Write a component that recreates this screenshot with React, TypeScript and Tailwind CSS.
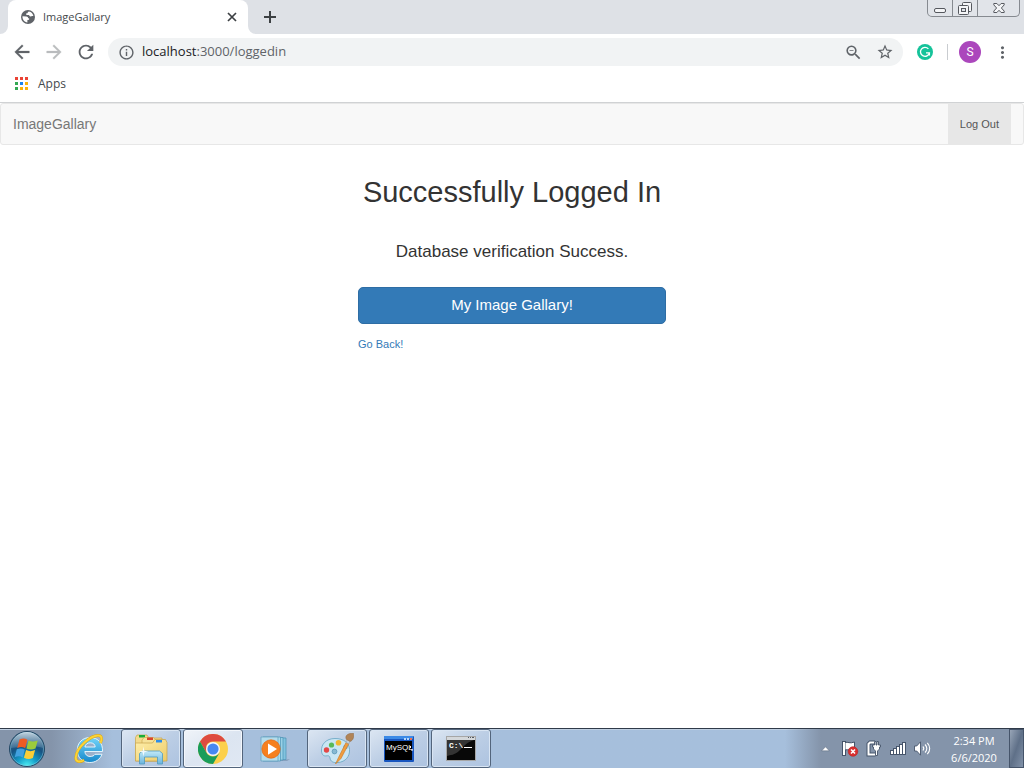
import React from 'react';
import {
  MdAdd,
  MdArrowBack,
  MdArrowForward,
  MdClose,
  MdInfoOutline,
  MdMoreVert,
  MdRefresh,
  MdStarBorder,
  MdZoomOut,
} from 'react-icons/md';

const APP_DOTS = [
  'bg-[#ea4335]', 'bg-[#ea4335]', 'bg-[#ea4335]',
  'bg-[#34a853]', 'bg-[#1a84f0]', 'bg-[#fbb30a]',
  'bg-[#34a853]', 'bg-[#fbb30a]', 'bg-[#fbb30a]',
];

function WindowControls() {
  return (
    <div className="mr-1 flex h-[17px] rounded-b-[5px] border border-t-0 border-[#868a90] bg-[#e1e4e9]">
      <button aria-label="Minimize" className="flex w-[25px] items-center justify-center border-r border-[#868a90]">
        <svg width="12" height="16" viewBox="0 0 12 16">
          <rect x="0.5" y="8.5" width="11" height="4" rx="1.5" fill="#f4f5f7" stroke="#55585e" />
        </svg>
      </button>
      <button aria-label="Restore" className="flex w-[25px] items-center justify-center border-r border-[#868a90]">
        <svg width="14" height="16" viewBox="0 0 14 16">
          <rect x="4.5" y="2.5" width="9" height="9" rx="1" fill="#f4f5f7" stroke="#55585e" />
          <rect x="0.5" y="5.5" width="10" height="9" rx="1" fill="#f4f5f7" stroke="#55585e" />
          <rect x="3.5" y="8.5" width="4" height="3" fill="#e1e4e9" stroke="#55585e" />
        </svg>
      </button>
      <button aria-label="Close window" className="flex w-[41px] items-center justify-center">
        <svg width="12" height="16" viewBox="0 0 12 16">
          <path
            d="M.8 3.5h3.1L6 5.7l2.1-2.200h3.1v1.400L8.400 8l2.800 3.100v1.400H8.100L6 10.300l-2.100 2.200H.8v-1.400L3.600 8 .8 4.900z"
            fill="#f4f5f7"
            stroke="#55585e"
          />
        </svg>
      </button>
    </div>
  );
}

function TabStrip() {
  return (
    <header className="flex h-[34px] items-start bg-[#dee1e6] pl-2">
      <div className="relative flex h-[34px] w-60 items-center rounded-t-lg bg-white pl-[13px] pr-2">
        <svg className="absolute bottom-0 -left-2" width="8" height="8" viewBox="0 0 8 8">
          <path d="M8 0v8H0a8 8 0 0 0 8-8z" fill="#fff" />
        </svg>
        <svg className="absolute bottom-0 -right-2" width="8" height="8" viewBox="0 0 8 8">
          <path d="M0 0v8h8a8 8 0 0 1-8-8z" fill="#fff" />
        </svg>
        <svg width="14" height="14" viewBox="0 0 14 14">
          <circle cx="7" cy="7" r="7" fill="#5f6368" />
          <path
            d="M1.500 6.300 5.400 6.400c1.200.1 1.700.8 1.700 1.800l1 .1v1.400L6.400 10v2.400C3.400 12.200 1.300 9.600 1.500 6.300zM8 1.600c-1 .3-1.500.9-1.400 1.700H5.300v1.600h2.300c.8 0 .9 1.500 1.900 1.600.8.1 1.200-.5 2.900-.4C12 3.800 10.300 2 8 1.600z"
            fill="#fff"
          />
        </svg>
        <span className="ml-2 flex-1 text-[11px] text-[#45494d]">ImageGallary</span>
        <button aria-label="Close tab" className="flex size-4 items-center justify-center text-[#3c4043]">
          <svg width="10" height="10" viewBox="0 0 10 10">
            <path d="m1 1 8 8m0-8-8 8" stroke="currentColor" strokeWidth="1.700" />
          </svg>
        </button>
      </div>
      <button aria-label="New tab" className="ml-3 flex h-[34px] w-5 items-center justify-center text-[#3c4043]">
        <svg width="12" height="12" viewBox="0 0 12 12">
          <path d="M6 0v12M0 6h12" stroke="currentColor" strokeWidth="2" />
        </svg>
      </button>
      <div className="flex-1" />
      <WindowControls />
    </header>
  );
}

function Toolbar() {
  return (
    <div className="flex h-9 items-center bg-white text-[#5f6368]">
      <button aria-label="Back" className="ml-3 flex w-5 justify-center">
        <MdArrowBack size={22} stroke="currentColor" strokeWidth={0.3} className="shrink-0 [&>path:first-child]:stroke-none" />
      </button>
      <button aria-label="Forward" className="ml-3 flex w-5 justify-center text-[#babcbe]">
        <MdArrowForward size={22} stroke="currentColor" strokeWidth={0.3} className="shrink-0 [&>path:first-child]:stroke-none" />
      </button>
      <button aria-label="Reload" className="ml-3 flex w-5 justify-center">
        <MdRefresh size={22} className="shrink-0" />
      </button>
      <div className="ml-3 flex h-7 flex-1 items-center rounded-full bg-[#f1f3f4] pl-[10px] pr-[9px]">
        <MdInfoOutline size={17} />
        <div className="ml-[7px] flex-1 text-[13px]">
          <span className="text-[#202124]">localhost</span>:3000/loggedin
        </div>
        <button aria-label="Zoom"><MdZoomOut size={19} /></button>
        <button aria-label="Bookmark this page" className="ml-[13px]"><MdStarBorder size={18} /></button>
      </div>
      <button aria-label="Grammarly" className="ml-[14px]">
        <svg width="16" height="16" viewBox="0 0 16 16">
          <circle cx="8" cy="8" r="8" fill="#15c39a" />
          <path d="M11.400 4.900A4.500 4.500 0 1 0 12.400 8.800H9M12.400 8.300v3.200" fill="none" stroke="#fff" strokeWidth="1.300" />
        </svg>
      </button>
      <div className="ml-[14px] h-4 w-px bg-[#c9ccd0]" />
      <button aria-label="Profile" className="ml-[11px] flex size-[22px] items-center justify-center rounded-full bg-[#ab47bc] font-[Roboto,sans-serif] text-xs text-white">
        S
      </button>
      <button aria-label="Menu" className="ml-[11px] mr-3 flex w-5 justify-center"><MdMoreVert size={19} /></button>
    </div>
  );
}

function BookmarksBar() {
  return (
    <div className="flex h-8 items-center bg-white pl-[15px] pb-[5px]">
      <a href="#apps" className="flex items-center gap-[10px] text-xs leading-[17px] text-[#45494d]">
        <span className="grid grid-cols-3 gap-[2px]">
          {APP_DOTS.map((c, i) => <span key={i} className={`size-[3px] ${c}`} />)}
        </span>
        Apps
      </a>
    </div>
  );
}

function Page() {
  return (
    <main className="flex-1 border-t border-[#d0d2d4] bg-white font-['Liberation_Sans',Arial,sans-serif] text-[#333]">
      <nav className="flex h-[42px] items-stretch justify-between rounded-[3px] border border-[#e7e7e7] bg-[#f8f8f8] pl-3 pr-3">
        <a href="#home" className="flex items-center text-[14px] text-[#777]">ImageGallary</a>
        <a href="#logout" className="flex items-center bg-[#e7e7e7] px-3 text-[11px] text-[#555]">Log Out</a>
      </nav>
      <section className="mx-auto flex w-[308px] flex-col">
        <h1 className="mt-[31px] text-center text-[29px] leading-8">Successfully Logged In</h1>
        <p className="mt-8 text-center text-[17px] leading-6">Database verification Success.</p>
        <button className="mt-[23px] h-[37px] rounded-[5px] border border-[#2e6da4] bg-[#337ab7] text-[15px] text-white">
          My Image Gallary!
        </button>
        <a href="#back" className="mt-3 self-start text-[11px] leading-4 text-[#337ab7]">Go Back!</a>
      </section>
    </main>
  );
}

function StartOrb() {
  return (
    <svg width="38" height="38" viewBox="0 0 38 38">
      <defs>
        <radialGradient id="orb" cx="50%" cy="100%" r="85%">
          <stop offset="0" stopColor="#4ff3f5" />
          <stop offset=".35" stopColor="#139cc8" />
          <stop offset=".7" stopColor="#175382" />
          <stop offset="1" stopColor="#3d6485" />
        </radialGradient>
        <linearGradient id="orbTop" x1="0" y1="0" x2="0" y2="1">
          <stop offset="0" stopColor="#e4f0f7" stopOpacity=".8" />
          <stop offset="1" stopColor="#7ba4bf" stopOpacity=".3" />
        </linearGradient>
      </defs>
      <circle cx="19" cy="19" r="17.500" fill="url(#orb)" stroke="#234865" />
      <circle cx="19" cy="19" r="16.500" fill="none" stroke="#8ac9df" strokeOpacity=".5" />
      <path d="M3 18a16 16 0 0 1 32 0c-8-3-22-1-32 0z" fill="url(#orbTop)" />
      <path d="M11.500 9.500c3.200-1.600 5.500-1.400 7.900.3l-2.200 8.400c-2.400-1.600-4.900-1.700-8-.3z" fill="#ed5b24" />
      <path d="M20.600 10.500c3 1.500 5.700 1.400 9.100 0l-2.200 8.100c-3.300 1.400-5.900 1.300-9.100-.1z" fill="#9bcb3c" />
      <path d="M8.800 19.300c3-1.300 5.500-1.200 8 .4l-2.100 7.800c-2.500-1.700-4.900-1.600-8-.3z" fill="#42a1df" />
      <path d="M18.100 20.100c3 1.400 5.700 1.400 9 0l-2.200 7.900c-3.300 1.400-5.700 1.300-9-.2z" fill="#fbce36" />
    </svg>
  );
}

function ExplorerE() {
  return (
    <svg width="32" height="32" viewBox="0 0 32 32">
      <defs>
        <linearGradient id="ie" x1="0" y1="0" x2="0" y2="1">
          <stop offset="0" stopColor="#74d4f8" />
          <stop offset="1" stopColor="#1688cc" />
        </linearGradient>
      </defs>
      <path
        d="M29.500 18.500H11.800c.4 3.300 2.500 5 5.300 5 2.300 0 3.900-.8 4.900-2.200h7C27 26.500 22.600 29.500 16.800 29.500 9.300 29.500 4.300 24.500 4.300 17.200 4.300 9.800 9.500 4.500 17 4.500c8 0 13 5.500 12.500 14zM22.200 14c-.2-2.700-2-4.200-4.900-4.200-2.900 0-4.900 1.600-5.400 4.200z"
        fill="url(#ie)"
        stroke="#eefaff"
        strokeWidth=".9"
      />
      <path d="M27.500 10c2-4.500 1.200-7.500-2.500-7.500C18 2.500 3.500 14 2.800 24.500c-.2 4.500 4 5 8.200 2.700" fill="none" stroke="#dba414" strokeWidth="2.800" />
      <path d="M27.500 10c2-4.500 1.200-7.500-2.500-7.500C18 2.500 3.500 14 2.800 24.500c-.2 4.500 4 5 8.200 2.700" fill="none" stroke="#fbd336" strokeWidth="2" />
    </svg>
  );
}

function FolderIcon() {
  return (
    <svg width="34" height="32" viewBox="0 0 34 32">
      <defs>
        <linearGradient id="fold" x1="0" y1="0" x2="1" y2="1">
          <stop offset="0" stopColor="#fff0ad" />
          <stop offset="1" stopColor="#edcb68" />
        </linearGradient>
        <linearGradient id="stand" x1="0" y1="0" x2="0" y2="1">
          <stop offset="0" stopColor="#c1e9f7" />
          <stop offset="1" stopColor="#6bb5dd" />
        </linearGradient>
      </defs>
      <path d="M1.500 28V4.500L3 2h10l2 3h13v23z" fill="#f4db8c" stroke="#c7a54d" strokeWidth=".7" />
      <path d="M5 2h6v2.500H5z" fill="#1aad38" />
      <path d="M8 28V7l2-2.500h9.500l2 2.500h9v21z" fill="#f7e299" stroke="#cba952" strokeWidth=".7" />
      <path d="M13 4.500h6V7h-6z" fill="#d9442f" />
      <path d="M1.500 28V10h17L21 6.500h10.500L33 9.500V28z" fill="url(#fold)" stroke="#c7a54d" strokeWidth=".7" />
      <path d="M22 7h6v2.500h-6z" fill="#2f8ee8" />
      <path d="M5.500 31V20.500l3-2.500h17l3 2.500V31h-5v-7H10.500v7z" fill="url(#stand)" stroke="#4f9abf" strokeWidth=".8" />
      <path d="m9.500 13.500.8 4.200 4.200.8-4.200.8-.8 4.200-.8-4.200-4.200-.8 4.200-.8z" fill="#fff" fillOpacity=".85" />
    </svg>
  );
}

function ChromeIcon() {
  return (
    <svg width="30" height="30" viewBox="0 0 30 30">
      <circle cx="15" cy="15" r="15" fill="#fcd04b" />
      <path d="M2 7.500A15 15 0 0 1 28 7.500H15a7.500 7.500 0 0 0-6.500 3.750L8.500 18.750z" fill="#de4b40" />
      <path d="M2 7.500 8.500 18.750A7.500 7.500 0 0 0 15 22.500c2.700 0 5.100-1.400 6.500-3.750L15 30A15 15 0 0 1 2 7.500z" fill="#199d5a" />
      <circle cx="15" cy="15" r="7" fill="#f4f7fb" />
      <circle cx="15" cy="15" r="5.600" fill="#4688f1" />
    </svg>
  );
}

function MediaIcon() {
  return (
    <svg width="32" height="28" viewBox="0 0 32 28">
      <path d="M20 25.500 31 24l-3 2H10z" fill="#67819f" fillOpacity=".5" />
      <path d="M8 2.500 27 3v21.500L8 25z" fill="#82c3df" stroke="#4a92b5" strokeWidth=".7" />
      <path d="M6 2.500h18V25H6z" fill="#99d1e7" stroke="#4a92b5" strokeWidth=".7" />
      <path d="M4 2h17.500v24H4z" fill="#aadcec" stroke="#4a92b5" strokeWidth=".7" />
      <path d="M2 2h17v24H2z" fill="#b4dcec" stroke="#5f9fbd" strokeWidth=".7" />
      <circle cx="12" cy="14" r="9.200" fill="#f5801f" stroke="#e26611" strokeWidth=".7" />
      <path d="m9 8.500 9 5.600-9 5.600z" fill="#fff" />
    </svg>
  );
}

function PaintIcon() {
  return (
    <svg width="34" height="32" viewBox="0 0 34 32">
      <path
        d="M15 5.500C6 5.500 1 11.500 1.500 18c.2 3.400 2 5.300 4.600 4.900 2.400-.4 3.600-.2 3.900 2.100.4 3.400 3 5 8 4.500C25.500 29 30 23.300 29.500 16.500 29 9.500 23.500 5.500 15 5.500z"
        fill="#c9e6f3"
        stroke="#6faac6"
        strokeWidth=".9"
      />
      <circle cx="14.500" cy="18.500" r="2.400" fill="#86b9d3" stroke="#5b98b6" strokeWidth=".8" />
      <circle cx="6.500" cy="17" r="2.700" fill="#e34747" />
      <circle cx="11.500" cy="12" r="2.600" fill="#58b957" />
      <circle cx="18.500" cy="9.800" r="2.800" fill="#f2b62f" />
      <circle cx="25.500" cy="14" r="2.200" fill="#5b9ee3" />
      <path d="m15.500 31 3-6.500L26 9.500l2.800 1.200L21 25.500z" fill="#ef9d3e" stroke="#c87925" strokeWidth=".6" />
      <path d="m26 9.500 1.200-3 3 1.500-1.400 2.700z" fill="#c4d0da" stroke="#8c9ba8" strokeWidth=".5" />
      <path d="M26.500 6.500c-1.500-2.500-.5-5 3.500-6L33.500.3c.5 3.700 0 7-3.500 8.200z" fill="#b18457" stroke="#8f6741" strokeWidth=".5" />
    </svg>
  );
}

function MysqlIcon() {
  return (
    <svg width="30" height="26" viewBox="0 0 30 26">
      <rect width="30" height="26" rx="1" fill="#1856bf" />
      <path d="M0 0h29v3H0z" fill="#3c8ae6" />
      <path d="M20 2h2v2h-2zM23 2h2v2h-2z" fill="#b5d7fc" />
      <path d="M26 2h2v2h-2z" fill="#ef7150" />
      <path d="M1 5h27v19H1z" />
      <text x="2" y="14" fill="#fff" fontFamily="Liberation Sans, sans-serif" fontSize="8">MySQL</text>
      <path d="m26 10 1 1-1 1M27 14h2" fill="none" stroke="#fff" />
    </svg>
  );
}

function ConsoleIcon() {
  return (
    <svg width="30" height="25" viewBox="0 0 30 25">
      <rect x=".5" y=".5" width="29" height="24" fill="#080808" stroke="#a6a6a6" />
      <path d="M1 1h28v3H1z" fill="#d4d7da" />
      <path d="M22 1h1v1h-1zM24 1h1v1h-1zM26 1h2v1h-2z" fill="#525963" />
      <path d="M1 4h27C21 6 17 11 13 15 9 19 4 19 1 20z" fill="#343434" />
      <text x="3" y="12" fill="#fff" fontFamily="Liberation Mono, monospace" fontSize="8" fontWeight="700">C:\</text>
      <path d="M18 11.500h8" stroke="#fff" />
    </svg>
  );
}

interface TaskItem {
  label: string;
  icon: React.ReactNode;
  state: 'idle' | 'open' | 'active';
}

const TASKS: TaskItem[] = [
  { label: 'Internet Explorer', icon: <ExplorerE />, state: 'idle' },
  { label: 'Windows Explorer', icon: <FolderIcon />, state: 'open' },
  { label: 'Google Chrome', icon: <ChromeIcon />, state: 'active' },
  { label: 'Media Player', icon: <MediaIcon />, state: 'idle' },
  { label: 'Paint', icon: <PaintIcon />, state: 'open' },
  { label: 'MySQL', icon: <MysqlIcon />, state: 'open' },
  { label: 'Command Prompt', icon: <ConsoleIcon />, state: 'open' },
];

const STATE_CLASS = {
  idle: 'border-transparent',
  open: 'border-[#53657c] bg-linear-to-br from-[#dce6f2] via-[#bccee5] to-[#adc3e0] shadow-[inset_0_0_0_1px_#d9e5f3]',
  active: 'border-[#53657c] bg-linear-to-br from-[#f0f4f9] via-[#dce5f1] to-[#e0e8f3] shadow-[inset_0_0_0_1px_#f3f7fc]',
};

function Tray() {
  return (
    <div className="flex items-center">
      <button aria-label="Show hidden icons">
        <svg width="9" height="6" viewBox="0 0 9 6"><path d="M.7 4.800 4.500.8l3.800 4z" fill="#fff" stroke="#56657a" strokeWidth=".5" /></svg>
      </button>
      <svg className="ml-3" width="17" height="17" viewBox="0 0 17 17">
        <path d="M0 1h4v15H0z" fill="#45546a" />
        <path d="M3 2.500c3-1 4.500 1.500 9.500-.5v7.500c-4.500 1.500-6-.5-9.500.5z" fill="#fff" stroke="#45546a" strokeWidth="1" />
        <path d="M1 2h2v13H1z" fill="#fff" />
        <circle cx="11" cy="11.500" r="4.800" fill="#d92f2f" stroke="#b92222" strokeWidth=".6" />
        <path d="m9 9.500 4 4m0-4-4 4" stroke="#fff" strokeWidth="1.600" />
      </svg>
      <svg className="ml-[7px]" width="16" height="17" viewBox="0 0 16 17">
        <path d="M9 2.500H4L2.500 4v10.500h7" fill="none" stroke="#45546a" strokeWidth="4" />
        <path d="M9 2.500H4L2.500 4v10.500h7" fill="none" stroke="#fff" strokeWidth="2" />
        <path d="M8.500 1.500v3.500h-2v2h1v2l2 2v4.500h2V11l2-2V7h1V5h-2V1.500h-1.500V5h-1V1.500z" fill="#fff" stroke="#45546a" strokeWidth=".9" />
      </svg>
      <svg className="ml-2" width="16" height="13" viewBox="0 0 16 13">
        <path d="M0 8h3V6h3V4h3V2h3V0h4v13H0z" fill="#45546a" />
        <path d="M1 9h2v3H1zM4 7h2v5H4zM7 5h2v7H7zM10 3h2v9h-2zM13 1h2v11h-2z" fill="#fff" />
      </svg>
      <svg className="ml-2" width="17" height="15" viewBox="0 0 17 15">
        <path d="M.5 5h2.200L6.500.8v13.400L2.700 10H.5z" fill="#fff" stroke="#45546a" strokeWidth=".9" />
        <path d="M8.800 5.500c1.200 1.200 1.200 2.800 0 4M11 3.500c2.400 2.300 2.400 5.700 0 8M13.300 1.800c3.200 3.400 3.200 8 0 11.400" fill="none" stroke="#fff" strokeWidth="1.100" />
      </svg>
    </div>
  );
}

function Taskbar() {
  return (
    <footer className="flex h-10 items-stretch border-t border-[#2f3a49] bg-linear-to-r from-[#8494aa] from-5% via-[#a6bfdc] via-11% to-[#a6bfdc] shadow-[inset_0_1px_0_#c0d0e2]">
      <button aria-label="Start" className="flex w-[59px] items-center pl-2"><StartOrb /></button>
      <div className="flex gap-[2px]">
        {TASKS.map((t) => (
          <button
            key={t.label}
            aria-label={t.label}
            className={`flex w-[60px] items-center justify-center rounded-[3px] border ${STATE_CLASS[t.state]}`}
          >
            {t.icon}
          </button>
        ))}
      </div>
      <div className="flex-1" />
      <div className="flex items-stretch bg-linear-to-r from-transparent to-[#8494aa] to-15% pl-9">
        <Tray />
        <div className="ml-[10px] flex w-[66px] flex-col items-center justify-center text-[11px] leading-[17px] text-white">
          <span>2:34 PM</span>
          <span>6/6/2020</span>
        </div>
        <button aria-label="Show desktop" className="ml-[2px] w-[15px] border border-[#45546a] bg-linear-to-br from-[#98a5b7] via-[#5f7088] to-[#8292a9]" />
      </div>
    </footer>
  );
}

export default function App() {
  return (
    <div className="flex min-h-screen flex-col bg-white font-['Open_Sans',sans-serif]">
      <TabStrip />
      <Toolbar />
      <BookmarksBar />
      <Page />
      <Taskbar />
    </div>
  );
}
